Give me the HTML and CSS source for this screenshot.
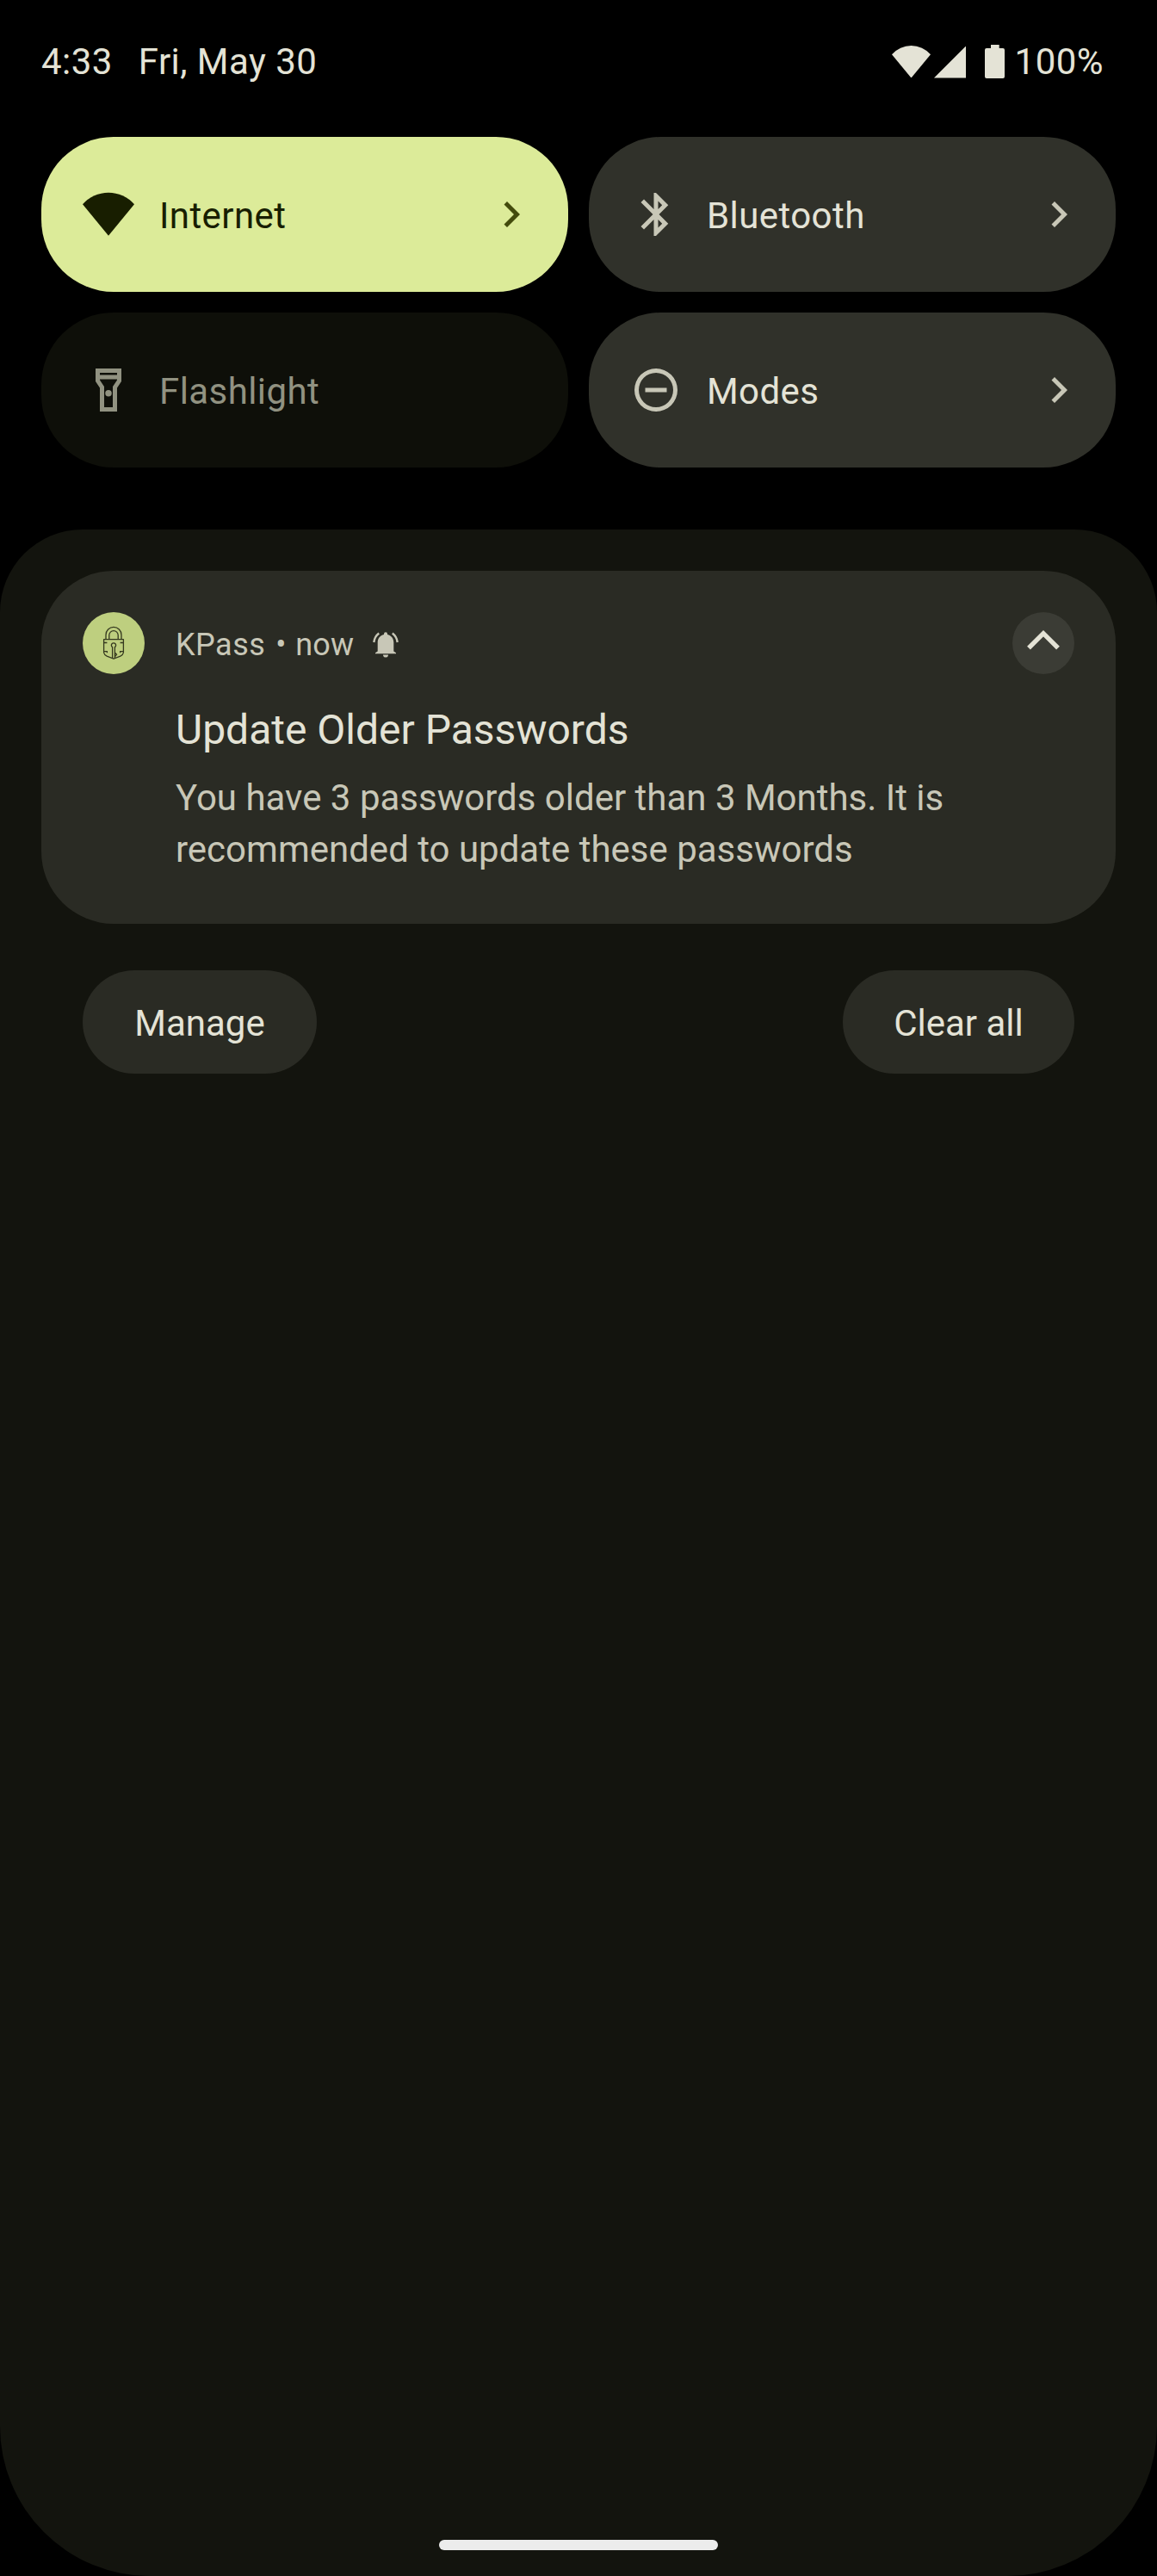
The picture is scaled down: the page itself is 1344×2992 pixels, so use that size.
FILE: index.html
```html
<!DOCTYPE html>
<html lang="en">
<head>
<meta charset="utf-8">
<title>Notifications</title>
<link rel="stylesheet" href="styles.css">
</head>
<body>
<header class="status">
  <span class="time">4:33</span>
  <span class="date">Fri, May 30</span>
  <div class="indicators">
    <svg class="signal-wifi" viewBox="0 0 60 50"><path d="M30 50L0 13.6A39.9 39.9 0 0 1 60 13.6Z"/></svg>
    <svg class="signal-cell" viewBox="0 0 38 38"><path d="M38 0V38H0Z"/></svg>
    <svg class="battery" viewBox="0 0 23 39"><path d="M7 0h9.7v4H21q2 0 2 2v31q0 2-2 2H2q-2 0-2-2V6q0-2 2-2h5z"/></svg>
    <span>100%</span>
  </div>
</header>

<section class="tiles">
  <button class="tile tile-on">
    <svg class="tile-icon" viewBox="0 0 60 60"><path d="M30 54.7L0 18.3A39.9 39.9 0 0 1 60 18.3Z"/></svg>
    <span class="tile-label">Internet</span>
    <svg class="chevron" viewBox="0 0 24 24"><path d="M8.6 7.4L13.2 12l-4.6 4.6L10 18l6-6-6-6z"/></svg>
  </button>
  <button class="tile">
    <svg class="tile-icon" viewBox="0 0 24 24"><path d="M17.71 7.71L12 2h-1v7.59L6.41 5 5 6.41 10.59 12 5 17.59 6.41 19 11 14.41V22h1l5.71-5.71-4.3-4.29 4.3-4.29zM13 5.83l1.88 1.88L13 9.59V5.83zm1.88 10.46L13 18.17v-3.76l1.88 1.88z"/></svg>
    <span class="tile-label">Bluetooth</span>
    <svg class="chevron" viewBox="0 0 24 24"><path d="M8.6 7.4L13.2 12l-4.6 4.6L10 18l6-6-6-6z"/></svg>
  </button>
  <button class="tile tile-off">
    <svg class="tile-icon" viewBox="0 0 24 24"><path d="M18 2H6v6l2 3v11h8V11l2-3V2zm-2 2v1H8V4h8zm-2 6.4V20h-4v-9.6L8 7.4V7h8v.4l-2 3z"/><circle cx="12" cy="13.5" r="1.5"/></svg>
    <span class="tile-label">Flashlight</span>
  </button>
  <button class="tile">
    <svg class="tile-icon" viewBox="0 0 24 24"><path d="M12 2a10 10 0 1 0 0 20 10 10 0 0 0 0-20zm0 18a8 8 0 1 1 0-16 8 8 0 0 1 0 16zM7 11h10v2H7z"/></svg>
    <span class="tile-label">Modes</span>
    <svg class="chevron" viewBox="0 0 24 24"><path d="M8.6 7.4L13.2 12l-4.6 4.6L10 18l6-6-6-6z"/></svg>
  </button>
</section>

<main class="shade">
  <article class="card">
    <svg class="app-icon" viewBox="0 0 72 72">
      <circle class="app-disc" cx="36" cy="36" r="36"/>
      <g class="lock">
        <path d="M27 31.5V26.4a9 9 0 0 1 18 0v5.1M30.8 31.5V26.8a5.2 5.2 0 0 1 10.4 0v4.7"/>
        <path d="M24.6 31.7H47.4V47q-.5 2.8-3.6 4.2L36 54.2l-7.8-3Q25.100 49.800 24.600 47z"/>
        <path d="M25 35.500h3.400M47 35.500h-3.400M25 45.600h3.400v1.600M47 45.600h-3.400v1.600"/>
        <path d="M34.600 53.500V40.600a2.600 2.600 0 1 1 2.800 0V53M37.600 47.200l2 2-1.800 2.200"/>
      </g>
    </svg>
    <div class="content">
      <div class="meta">
        <span>KPass</span><span class="dot">•</span><span class="when">now</span>
        <svg class="bell" viewBox="0 0 30 30"><path d="M15 .3a2 2 0 0 1 2 2V3c4.600 1 7.300 4.600 7.300 9.200v10.300l2.700 1.800v1H3v-1l2.700-1.800V12.200C5.700 7.600 8.400 4 13 3v-.7a2 2 0 0 1 2-2zM12 26.600h6a3 3 0 0 1-6 0z"/><path class="ring" d="M7.200 1.500Q2 5.500 1.300 12M22.800 1.500Q28 5.500 28.700 12"/></svg>
      </div>
      <h1>Update Older Passwords</h1>
      <p>You have 3 passwords older than 3 Months. It is recommended to update these passwords</p>
    </div>
    <button class="collapse"><svg viewBox="0 0 72 72"><path d="M19 41.700L36 24.700L53 41.700"/></svg></button>
  </article>
  <footer class="actions">
    <button class="pill manage">Manage</button>
    <button class="pill clear">Clear all</button>
  </footer>
  <div class="home-bar"></div>
</main>
</body>
</html>
```
FILE: styles.css
```css
* { box-sizing: border-box; }

body {
  margin: 0;
  height: 2992px;
  display: flex;
  flex-direction: column;
  background: #000;
  color: #e4e3d6;
  font: 42px/50px Roboto, sans-serif;
}

button {
  border: 0;
  padding: 0;
  color: inherit;
  font: inherit;
}

svg { display: block; flex: none; fill: currentColor; }

/* status bar */
.status {
  display: flex;
  height: 159px;
  padding: 47px 62px 0 48px;
  letter-spacing: .45px;
}
.date { margin-left: 30px; }
.indicators {
  display: flex;
  margin-left: auto;
}
.signal-wifi { width: 45px; height: 37.5px; margin: 5.5px 4px 0 0; }
.signal-cell { width: 37.5px; height: 37.5px; margin: 6px 21.5px 0 0; }
.battery { width: 23px; height: 39px; margin: 5px 12px 0 0; }

/* quick settings */
.tiles {
  display: grid;
  grid-template-columns: 1fr 1fr;
  gap: 24px;
  padding: 0 48px 72px;
}
.tile {
  display: flex;
  align-items: center;
  height: 180px;
  padding: 0 36px 0 48px;
  border-radius: 84px;
  background: #30312a;
  letter-spacing: .42px;
}
.tile-icon, .chevron { width: 60px; height: 60px; color: #c8c7b7; }
.tile-label { padding-top: 3px; margin-left: 29px; }
.chevron { margin-left: auto; }
.tile-on { background: #dceb99; color: #181e00; }
.tile-on .tile-icon { color: #181e00; }
.tile-on .chevron { color: #434b0c; }
.tile-off { background: #0e0f09; color: #919281; }
.tile-off .tile-icon { color: #919281; }

/* notification shade */
.shade {
  flex: 1;
  display: flex;
  flex-direction: column;
  padding: 48px 48px 30px;
  border-radius: 96px 96px 174px 174px;
  background: #13140e;
}
.card {
  display: flex;
  align-items: flex-start;
  height: 410px;
  padding: 48px;
  border-radius: 84px;
  background: #2a2b24;
}
.app-icon { width: 72px; height: 72px; }
.app-disc { fill: #becf7f; }
.lock { fill: none; stroke: #35391f; stroke-width: 1.3; stroke-linejoin: round; }
.content { flex: 1; margin-left: 36px; }
.meta {
  display: flex;
  align-items: center;
  height: 72px;
  padding-top: 4px;
  color: #c8c7b7;
  font-size: 36px;
  letter-spacing: .5px;
}
.dot { width: 12px; margin: 0 11px 0 12px; letter-spacing: 0; }
.when { letter-spacing: .1px; }
.bell { width: 30px; height: 30px; margin-left: 22px; }
.ring { fill: none; stroke: currentColor; stroke-width: 2.4; }
h1 { margin: 35px 0 0; font-size: 48px; font-weight: 400; line-height: 60px; }
p { width: 930px; margin: 19px 0 0; color: #c8c7b7; line-height: 60px; }
.collapse { width: 72px; height: 72px; border-radius: 50%; background: #3b3c35; }
.collapse path { fill: none; stroke: currentColor; stroke-width: 5.4; }

.actions {
  display: flex;
  justify-content: space-between;
  padding: 54px 48px 0;
}
.pill { height: 120px; padding-top: 3px; border-radius: 60px; background: #2a2b24; }
.manage { width: 272px; }
.clear { width: 269px; }

.home-bar {
  width: 324px;
  height: 12px;
  margin: auto auto 0;
  border-radius: 6px;
  background: #ececec;
}
```
